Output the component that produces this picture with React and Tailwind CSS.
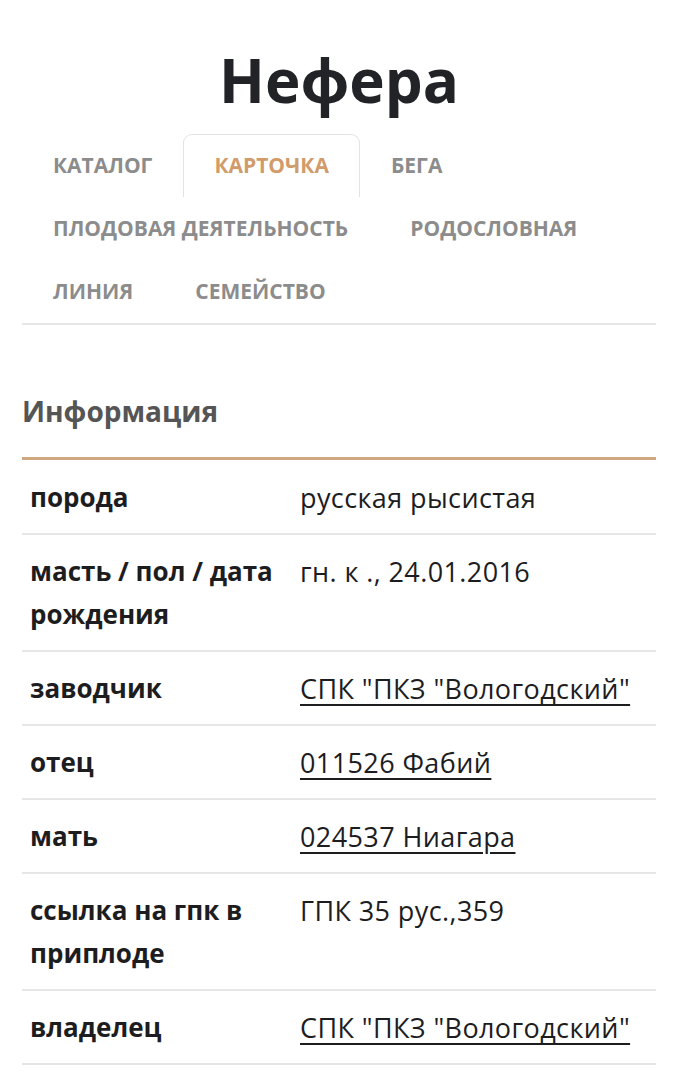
import { useState } from 'react';

const allTabs = ['КАТАЛОГ', 'КАРТОЧКА', 'БЕГА', 'ПЛОДОВАЯ ДЕЯТЕЛЬНОСТЬ', 'РОДОСЛОВНАЯ', 'ЛИНИЯ', 'СЕМЕЙСТВО'];

const rows = [
  { label: 'порода', value: 'русская рысистая' },
  { label: 'масть / пол / дата рождения', value: 'гн. к ., 24.01.2016' },
  { label: 'заводчик', value: 'СПК "ПКЗ "Вологодский"', link: true },
  { label: 'отец', value: '011526 Фабий', link: true },
  { label: 'мать', value: '024537 Ниагара', link: true },
  { label: 'ссылка на гпк в приплоде', value: 'ГПК 35 рус.,359' },
  { label: 'владелец', value: 'СПК "ПКЗ "Вологодский"', link: true },
];

export default function App() {
  const [active, setActive] = useState('КАРТОЧКА');

  return (
    <div className="min-h-screen bg-white px-[22px] pt-[40px] font-['Open_Sans','Liberation_Sans',sans-serif]">
      <h1 className="text-center text-[60px] font-bold leading-[80px] text-[#222326]">Нефера</h1>

      {/* вкладки */}
      <div className="mt-[14px] flex flex-wrap border-b-2 border-[#e6e6e6]">
        {allTabs.map(t => (
          <button
            key={t}
            onClick={() => setActive(t)}
            className={`h-[63px] px-[30px] text-[21px] font-bold uppercase ${
              t === active
                ? 'rounded-t-[9px] border border-b-0 border-[#e3e3e3] text-[#d19b6a]'
                : 'border border-transparent text-[#8c8c8c]'
            }`}
          >
            {t}
          </button>
        ))}
      </div>

      <h2 className="mt-[66px] text-[28px] font-bold leading-[40px] text-[#555]">Информация</h2>

      <div className="mt-[26px] border-t-[3px] border-[#cfa87f]">
        {rows.map((r, i) => (
          <div key={r.label} className={`flex border-b-2 border-[#e6e6e6] pb-[14px] text-[#1d1d1f] ${i === 0 ? 'pt-[16px]' : 'pt-[15px]'}`}>
            <div className="w-[278px] shrink-0 pl-[8px] pr-[10px] text-[26px] font-bold leading-[43px]">{r.label}</div>
            <div className="flex-1 text-[27px] leading-[43px] tracking-[0.4px]">
              {r.link ? <a href="#" className="underline underline-offset-[5px]">{r.value}</a> : r.value}
            </div>
          </div>
        ))}
      </div>
    </div>
  );
}
